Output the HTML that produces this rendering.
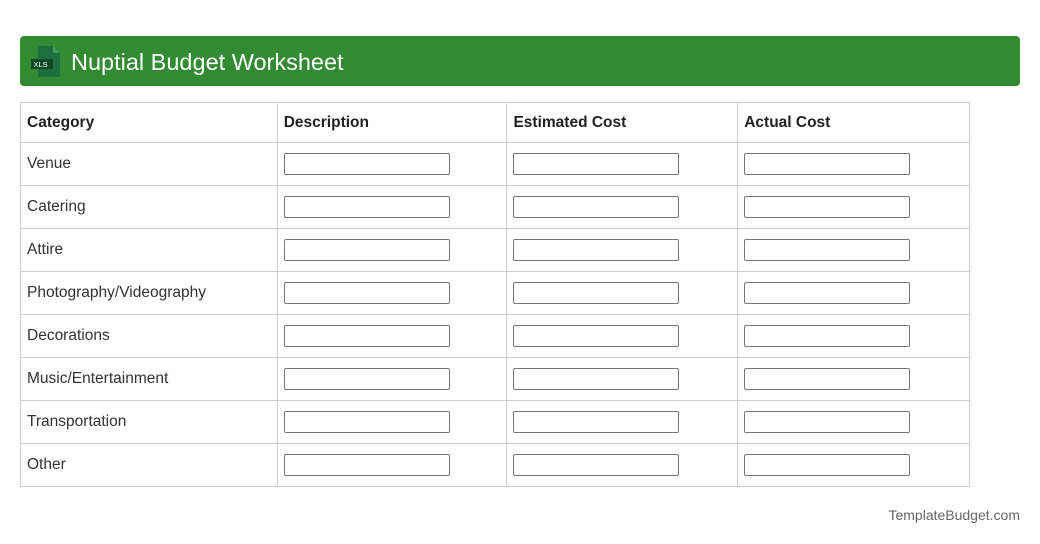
<!DOCTYPE html>
<html><head><style>
body{margin:0;background:#fff;font-family:"Liberation Sans",Roboto,sans-serif;color:#333;}
.hdr{position:absolute;left:20px;top:36px;width:1000px;height:50px;background:#328a33;border-radius:4px;}
.hdr h1{position:absolute;left:51px;top:1px;margin:0;line-height:50px;font-size:23.5px;font-weight:normal;color:#fff;}
.hdr svg{position:absolute;left:10px;top:10px;}
table{position:absolute;left:20px;top:102px;border-collapse:collapse;width:950px;font-size:15.5px;}
td,th{border:1px solid #ccc;padding:0 6px;height:42px;text-align:left;}
th{height:39px;font-weight:bold;color:#222;}
td{color:#333;}
input{width:166px;height:22px;box-sizing:border-box;border:1px solid #777;border-radius:2px;margin:0;display:block;}
.ft{position:absolute;right:20px;top:507px;font-size:14px;color:#666;}
</style></head><body>
<div class="hdr"><svg width="32" height="32" viewBox="0 0 32 32"><path d="M8 0h15l7 7v23a1 1 0 0 1-1 1H8z" fill="#1f6e3d"/><path d="M23 0v7h7z" fill="#3e9a5f"/><rect x="1" y="13" width="22" height="10" fill="#0e4a25"/><text x="3.5" y="21" font-size="7.5" fill="#fff" font-family="Liberation Sans">XLS</text></svg><h1>Nuptial Budget Worksheet</h1></div>
<table>
<colgroup><col style="width:257px"><col style="width:230px"><col style="width:231px"><col style="width:232px"></colgroup>
<tr><th>Category</th><th>Description</th><th>Estimated Cost</th><th>Actual Cost</th></tr>
<tr><td>Venue</td><td><input></td><td><input></td><td><input></td></tr>
<tr><td>Catering</td><td><input></td><td><input></td><td><input></td></tr>
<tr><td>Attire</td><td><input></td><td><input></td><td><input></td></tr>
<tr><td>Photography/Videography</td><td><input></td><td><input></td><td><input></td></tr>
<tr><td>Decorations</td><td><input></td><td><input></td><td><input></td></tr>
<tr><td>Music/Entertainment</td><td><input></td><td><input></td><td><input></td></tr>
<tr><td>Transportation</td><td><input></td><td><input></td><td><input></td></tr>
<tr><td>Other</td><td><input></td><td><input></td><td><input></td></tr>
</table>
<div class="ft">TemplateBudget.com</div>
</body></html>
